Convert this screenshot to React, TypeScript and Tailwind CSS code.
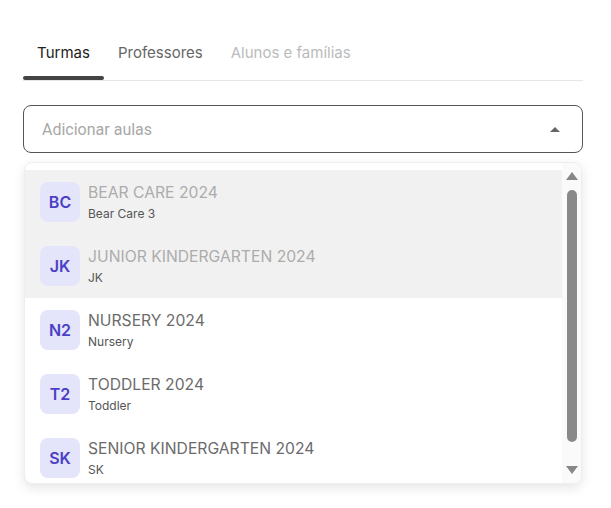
import React from "react";

const items = [
  { ab: "BC", title: "BEAR CARE 2024", sub: "Bear Care 3", active: true },
  { ab: "JK", title: "JUNIOR KINDERGARTEN 2024", sub: "JK", active: true },
  { ab: "N2", title: "NURSERY 2024", sub: "Nursery", active: false },
  { ab: "T2", title: "TODDLER 2024", sub: "Toddler", active: false },
  { ab: "SK", title: "SENIOR KINDERGARTEN 2024", sub: "SK", active: false },
];

export default function App() {
  return (
    <div className="w-[611px] h-[508px] bg-white overflow-hidden" style={{ fontFamily: "Inter, 'Noto Sans', sans-serif" }}>
      <div className="pt-[38px] pl-[23px] w-[560px] box-content">
        <div className="flex border-b border-[#e6e6e6] text-[15px]">
          <div className="w-[81px] flex flex-col items-center">
            <div className="h-[38px] text-[#222] leading-[30px]">Turmas</div>
            <div className="h-[4px] w-full bg-[#444] rounded-[2px]"></div>
          </div>
          <div className="px-[14px] h-[42px] leading-[30px] text-[#666]">Professores</div>
          <div className="px-[14px] h-[42px] leading-[30px] text-[#bbb]">Alunos e famílias</div>
        </div>
        <div className="mt-[24px] h-[48px] border border-[#555] rounded-[8px] flex items-center pl-[18px] pr-[22px]">
          <span className="flex-1 text-[16px] text-[#a8a8a8] mt-[2px]" style={{ fontFamily: "Roboto, sans-serif" }}>Adicionar aulas</span>
          <svg width="10" height="6" viewBox="0 0 10 6"><path d="M0 6 L5 1 L10 6 Z" fill="#666" /></svg>
        </div>
        <div className="mt-[9px] ml-[1px] w-[558px] h-[322px] rounded-[8px] bg-white border border-[#eeeeee] shadow-[0_4px_12px_rgba(0,0,0,0.10)] overflow-hidden flex">
          <div className="flex-1 pt-[7px] overflow-hidden">
            {items.map((it) => (
              <div key={it.ab} className={`h-[64px] flex items-center pl-[15px] ${it.active ? "bg-[#f1f1f1]" : ""}`}>
                <div className="w-[40px] h-[40px] rounded-[8px] bg-[#e4e4fb] flex items-center justify-center text-[16px] font-semibold text-[#4b40c4]">
                  {it.ab}
                </div>
                <div className="ml-[8px] flex flex-col">
                  <div className={`text-[15.7px] leading-[20px] ${it.active ? "text-[#acacac]" : "text-[#6b6b6b]"}`}>{it.title}</div>
                  <div className="text-[12px] leading-[16px] mt-[3px] text-[#555]">{it.sub}</div>
                </div>
              </div>
            ))}
          </div>
          <div className="w-[19px] bg-[#fafafa] flex flex-col items-center pt-[9px]">
            <svg width="12" height="8" viewBox="0 0 12 8"><path d="M0 8 L6 0 L12 8 Z" fill="#888" /></svg>
            <div className="mt-[10px] w-[10px] h-[252px] rounded-full bg-[#898989]"></div>
            <svg className="mt-[24px]" width="12" height="8" viewBox="0 0 12 8"><path d="M0 0 L6 8 L12 0 Z" fill="#888" /></svg>
          </div>
        </div>
      </div>
    </div>
  );
}
